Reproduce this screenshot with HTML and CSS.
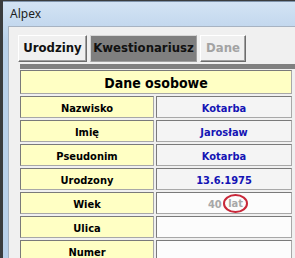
FILE: index.html
```html
<!DOCTYPE html>
<html lang="pl">
<head>
    <meta charset="UTF-8">
    <title>Alpex</title>
    <link rel="stylesheet" href="styles.css">
</head>
<body>
    <div class="desk">
        <div class="window">
            <div class="titlebar">Alpex</div>
            <div class="client">
                <div class="tabs">
                    <div class="tab tab-urodziny">Urodziny</div>
                    <div class="tab tab-active">Kwestionariusz</div>
                    <div class="tab tab-disabled">Dane</div>
                </div>
                <div class="bar"></div>
                <div class="form">
                    <div class="cell head">Dane osobowe</div>
                    <div class="cell label">Nazwisko</div>
                    <div class="cell value">Kotarba</div>
                    <div class="cell label">Imię</div>
                    <div class="cell value">Jarosław</div>
                    <div class="cell label">Pseudonim</div>
                    <div class="cell value">Kotarba</div>
                    <div class="cell label">Urodzony</div>
                    <div class="cell value">13.6.1975</div>
                    <div class="cell label">Wiek</div>
                    <div class="cell value empty age">40 <span class="mark">lat</span></div>
                    <div class="cell label">Ulica</div>
                    <div class="cell value empty"></div>
                    <div class="cell label">Numer</div>
                    <div class="cell value empty"></div>
                </div>
            </div>
        </div>
    </div>
</body>
</html>
```

FILE: styles.css
```css
html, body {
    margin: 0;
    padding: 0;
    width: 295px;
    height: 258px;
    overflow: hidden;
}
.desk {
    display: flex;
    height: 258px;
    background: #3a3c3e;
    padding-left: 3px;
    padding-top: 1px;
    box-sizing: border-box;
}
.window {
    flex: 1;
    display: flex;
    flex-direction: column;
    background: linear-gradient(#d3e3f4, #b9d1ea 40px);
    padding-left: 5px;
    border-top: 1px solid #7f93ab;
}
.titlebar {
    height: 26px;
    line-height: 24px;
    padding-left: 2px;
    font-family: "Noto Sans", sans-serif;
    font-size: 12px;
    color: #1e1e1e;
}
.client {
    flex: 1;
    background: #f0f0f0;
    border-top: 1px solid #a7b3c2;
    border-left: 1px solid #a7b3c2;
    padding: 8px 0 0 9px;
}
.tabs {
    display: flex;
    gap: 3px;
    height: 27px;
}
.tab {
    box-sizing: border-box;
    height: 27px;
    line-height: 24px;
    text-align: center;
    font-family: "DejaVu Sans Condensed", "DejaVu Sans", sans-serif;
    font-weight: bold;
    font-size: 13px;
    color: #111;
    background: #f0f0f0;
    border: 1px solid;
    border-color: #ffffff #6d6d6d #6d6d6d #ffffff;
    box-shadow: inset -1px -1px 0 #a0a0a0;
}
.tab-urodziny {
    width: 69px;
}
.tab-active {
    width: 107px;
    background: #7f7f7f;
    border-color: #d8d8d8 #a0a0a0 #a0a0a0 #d8d8d8;
    box-shadow: none;
}
.tab-disabled {
    width: 46px;
    color: #a3a3a3;
}
.bar {
    height: 5px;
    margin: 2px 0 1px 2px;
    background: #808080;
}
.form {
    display: grid;
    grid-template-columns: 134px 136px;
    grid-template-rows: 24px;
    grid-auto-rows: 22px;
    gap: 2px 2px;
    margin-left: 2px;
    font-family: "DejaVu Sans Condensed", "DejaVu Sans", sans-serif;
    font-weight: bold;
    font-size: 11px;
}
.cell {
    box-sizing: border-box;
    border: 1px solid;
    border-color: #7a7a7a #a8a8a8 #a8a8a8 #7a7a7a;
    text-align: center;
    line-height: 17px;
    padding-top: 3px;
}
.head {
    grid-column: 1 / 3;
    background: #ffffc4;
    font-size: 14px;
    line-height: 19px;
    color: #000;
}
.label {
    background: #ffffc4;
    color: #000;
}
.value {
    background: #f4f4f4;
    color: #1414b4;
}
.empty {
    background: #fcfcfc;
}
.age {
    padding-left: 8px;
    color: #a8a8a8;
}
.mark {
    display: inline-block;
    padding: 0 3px;
    margin: -4px 0 0 -2px;
    line-height: 15px;
    border: 2px solid #c8283a;
    border-radius: 50%;
    vertical-align: middle;
}
```
